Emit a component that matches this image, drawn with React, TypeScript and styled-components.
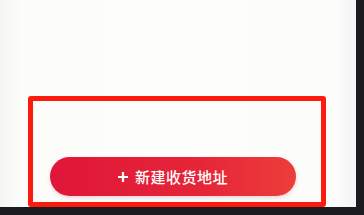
import styled, { createGlobalStyle } from "styled-components";

const GlobalStyle = createGlobalStyle`
  html, body {
    margin: 0;
    padding: 0;
    background: #1b1b1d;
  }
  body {
    font-family: "Noto Sans CJK SC", "Noto Sans", sans-serif;
    width: 364px;
    height: 215px;
    overflow: hidden;
  }
`;

const Screen = styled.div`
  width: 356px;
  height: 207px;
  box-sizing: border-box;
  padding: 96px 0 0 28px;
  background: linear-gradient(90deg, #f5f5f3 0%, #fcfcfb 6%, #fdfdfc 50%, #fcfcfb 94%, #f4f4f4 100%);
`;

const Highlight = styled.div`
  width: 298px;
  height: 111px;
  box-sizing: border-box;
  border: 5px solid #fd1b0f;
  border-radius: 3px;
  padding: 56px 0 0 17px;
`;

const AddButton = styled.button`
  width: 246px;
  height: 39px;
  border: none;
  border-radius: 20px;
  background: linear-gradient(90deg, #df1639 0%, #e52538 60%, #ec3d3a 100%);
  box-shadow: 0 2px 4px rgba(200, 30, 50, 0.18);
  color: #fff;
  display: flex;
  align-items: center;
  justify-content: center;
  gap: 7px;
  padding: 0;
  font-family: "Noto Sans CJK SC", "Noto Sans", sans-serif;
  font-size: 15px;
  font-weight: 500;
  letter-spacing: 0.5px;
  cursor: pointer;
`;

const PlusIcon = () => (
  <svg width="10" height="10" viewBox="0 0 10 10">
    <path d="M5 0.5v9M0.5 5h9" stroke="#fff" strokeWidth="2.2" strokeLinecap="square" />
  </svg>
);

export default function App() {
  return (
    <>
      <GlobalStyle />
      <Screen>
        <Highlight>
          <AddButton>
            <PlusIcon />
            <span>新建收货地址</span>
          </AddButton>
        </Highlight>
      </Screen>
    </>
  );
}
